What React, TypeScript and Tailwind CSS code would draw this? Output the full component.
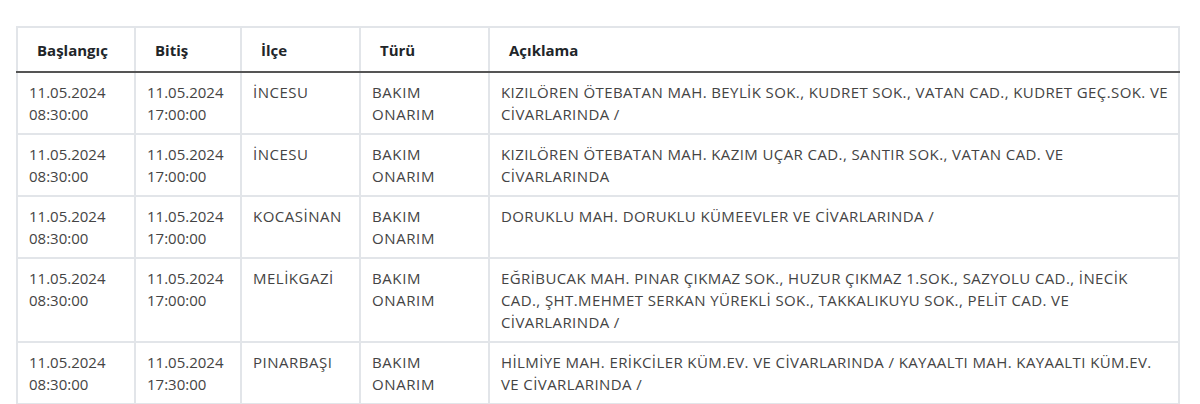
import React from "react";

const rows = [
  {
    s: ["11.05.2024", "08:30:00"],
    e: ["11.05.2024", "17:00:00"],
    ilce: "İNCESU",
    desc: [
      "KIZILÖREN ÖTEBATAN MAH. BEYLİK SOK., KUDRET SOK., VATAN CAD., KUDRET GEÇ.SOK. VE",
      "CİVARLARINDA /",
    ],
  },
  {
    s: ["11.05.2024", "08:30:00"],
    e: ["11.05.2024", "17:00:00"],
    ilce: "İNCESU",
    desc: ["KIZILÖREN ÖTEBATAN MAH. KAZIM UÇAR CAD., SANTIR SOK., VATAN CAD. VE", "CİVARLARINDA"],
  },
  {
    s: ["11.05.2024", "08:30:00"],
    e: ["11.05.2024", "17:00:00"],
    ilce: "KOCASİNAN",
    desc: ["DORUKLU MAH. DORUKLU KÜMEEVLER VE CİVARLARINDA /"],
  },
  {
    s: ["11.05.2024", "08:30:00"],
    e: ["11.05.2024", "17:00:00"],
    ilce: "MELİKGAZİ",
    desc: [
      "EĞRİBUCAK MAH. PINAR ÇIKMAZ SOK., HUZUR ÇIKMAZ 1.SOK., SAZYOLU CAD., İNECİK",
      "CAD., ŞHT.MEHMET SERKAN YÜREKLİ SOK., TAKKALIKUYU SOK., PELİT CAD. VE",
      "CİVARLARINDA /",
    ],
  },
  {
    s: ["11.05.2024", "08:30:00"],
    e: ["11.05.2024", "17:30:00"],
    ilce: "PINARBAŞI",
    desc: [
      "HİLMİYE MAH. ERİKCİLER KÜM.EV. VE CİVARLARINDA / KAYAALTI MAH. KAYAALTI KÜM.EV.",
      "VE CİVARLARINDA /",
    ],
  },
];

export default function App() {
  return (
    <div className="w-[1200px] h-[404px] overflow-hidden bg-white pt-[26px] pl-[16px] font-['Open_Sans',sans-serif]">
      <table className="w-[1164px] table-fixed border-collapse text-[15px] leading-[22px] text-[#444]">
        <colgroup>
          <col className="w-[118px]" />
          <col className="w-[106px]" />
          <col className="w-[119px]" />
          <col className="w-[129px]" />
          <col />
        </colgroup>
        <thead>
          <tr className="h-[45px]">
            {["Başlangıç", "Bitiş", "İlçe", "Türü", "Açıklama"].map((h) => (
              <th
                key={h}
                className="border-2 border-[#e2e5e9] border-b-[#555] pl-[19px] pr-3 text-left align-middle font-bold text-[#212529]"
              >
                {h}
              </th>
            ))}
          </tr>
        </thead>
        <tbody>
          {rows.map((r, i) => (
            <tr key={i}>
              <td className="border-2 border-[#e2e5e9] px-[11px] py-[8px] align-top">
                {r.s[0]}
                <br />
                {r.s[1]}
              </td>
              <td className="border-2 border-[#e2e5e9] px-[11px] py-[8px] align-top">
                {r.e[0]}
                <br />
                {r.e[1]}
              </td>
              <td className="border-2 border-[#e2e5e9] px-[11px] py-[8px] align-top tracking-[0.5px]">
                {r.ilce}
              </td>
              <td className="border-2 border-[#e2e5e9] px-[11px] py-[8px] align-top tracking-[0.6px]">
                BAKIM
                <br />
                ONARIM
              </td>
              <td className="border-2 border-[#e2e5e9] px-[11px] py-[8px] align-top whitespace-nowrap tracking-[0.4px]">
                {r.desc.map((line, j) => (
                  <div key={j}>{line}</div>
                ))}
              </td>
            </tr>
          ))}
        </tbody>
      </table>
    </div>
  );
}
